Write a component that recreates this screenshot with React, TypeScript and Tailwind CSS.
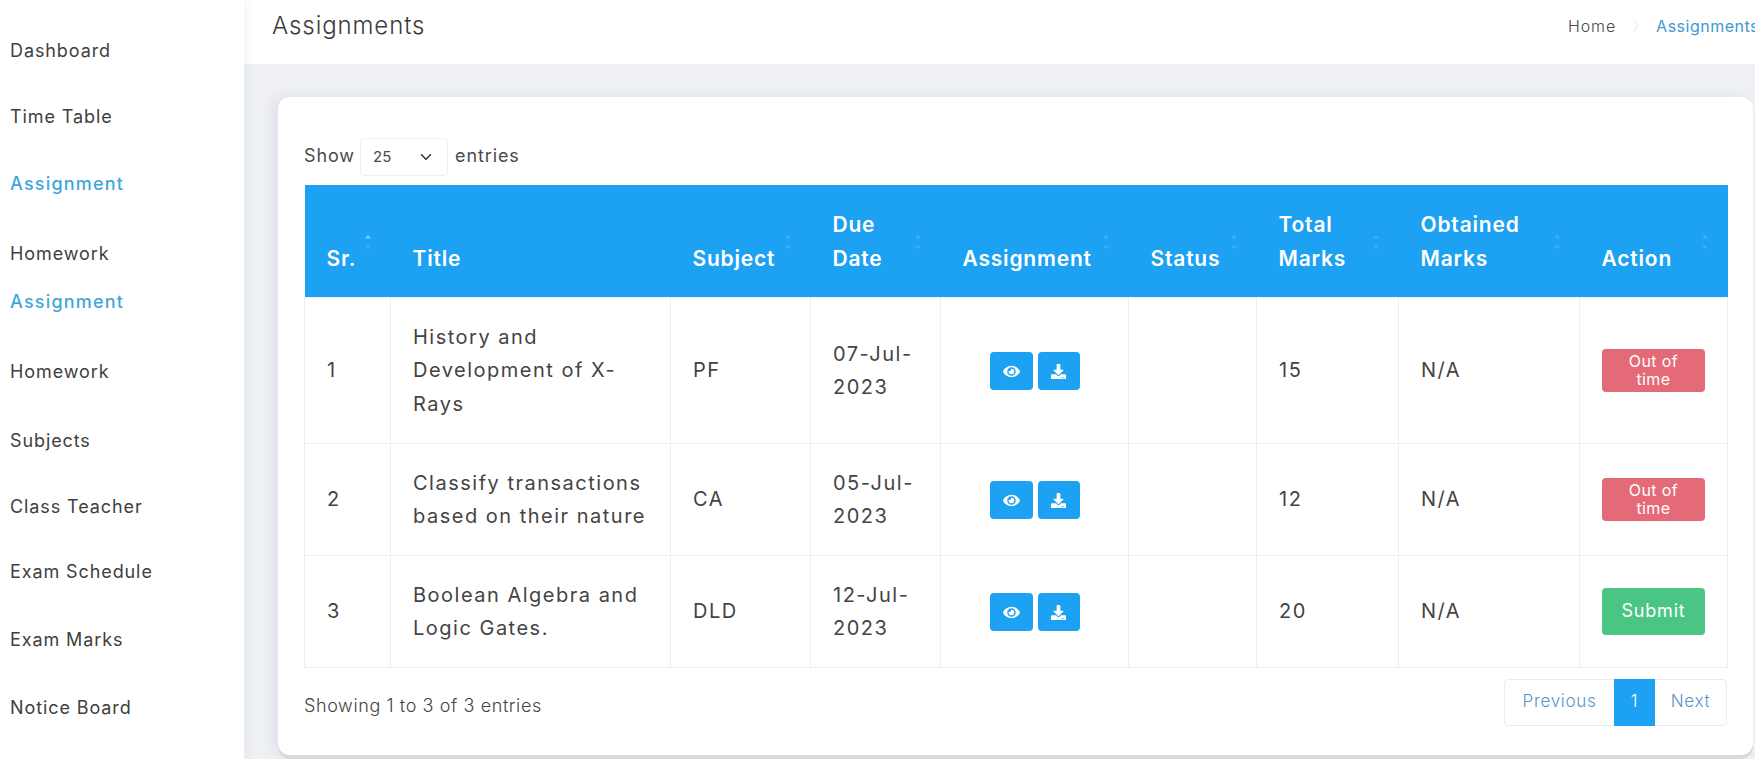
import { FaEye, FaDownload } from "react-icons/fa";
import { ChevronDown, ChevronRight } from "lucide-react";

const nav = [
  { label: "Dashboard", cls: "mt-[39px] text-[#404040]" },
  { label: "Time Table", cls: "mt-[42px] text-[#404040]" },
  { label: "Assignment", cls: "mt-[43px] text-[#3fa7db] font-medium tracking-[1.2px]" },
  { label: "Homework", cls: "mt-[46px] text-[#404040]" },
  { label: "Assignment", cls: "mt-[24px] text-[#3fa7db] font-medium tracking-[1.2px]" },
  { label: "Homework", cls: "mt-[46px] text-[#404040]" },
  { label: "Subjects", cls: "mt-[45px] text-[#404040]" },
  { label: "Class Teacher", cls: "mt-[42px] text-[#404040]" },
  { label: "Exam Schedule", cls: "mt-[41px] text-[#404040]" },
  { label: "Exam Marks", cls: "mt-[44px] text-[#404040]" },
  { label: "Notice Board", cls: "mt-[44px] text-[#404040]" },
];

function SortIcon({ active = false }: { active?: boolean }) {
  return (
    <svg className="absolute right-[18px] top-[48px]" width="10" height="18" viewBox="0 0 10 18">
      <path d="M5 1.5 L8 5.5 L2 5.5 Z" fill={active ? "#7cc8fa" : "#3fadf5"} />
      <path d="M5 16.5 L8 12.5 L2 12.5 Z" fill="#3fadf5" />
    </svg>
  );
}

const heads: { lines: string[]; active?: boolean; noSort?: boolean }[] = [
  { lines: ["Sr."], active: true },
  { lines: ["Title"], noSort: true },
  { lines: ["Subject"] },
  { lines: ["Due", "Date"] },
  { lines: ["Assignment"] },
  { lines: ["Status"] },
  { lines: ["Total", "Marks"] },
  { lines: ["Obtained", "Marks"] },
  { lines: ["Action"] },
];

const rows = [
  { sr: "1", title: ["History and", "Development of X-", "Rays"], subject: "PF", date: ["07-Jul-", "2023"], marks: "15", h: "h-[146px]", late: true },
  { sr: "2", title: ["Classify transactions", "based on their nature"], subject: "CA", date: ["05-Jul-", "2023"], marks: "12", h: "h-[112px]", late: true },
  { sr: "3", title: ["Boolean Algebra and", "Logic Gates."], subject: "DLD", date: ["12-Jul-", "2023"], marks: "20", h: "h-[112px]", late: false },
];

const cell = "border border-[#eceef2] px-[22px] pt-[2px] align-middle text-[20px] leading-[33.5px] tracking-[1.5px] text-[#444444] whitespace-nowrap";

export default function App() {
  return (
    <div className="flex h-[759px] w-[1755px] overflow-hidden bg-[#eef0f4] font-['Inter',sans-serif]">
      <aside className="relative z-10 flex h-full w-[244px] shrink-0 flex-col bg-white pl-[10px] text-[18px] leading-[24px] tracking-[0.9px] shadow-[2px_0_10px_rgba(120,130,150,0.1)]">
        {nav.map((n, i) => (
          <div key={i} className={n.cls}>
            {n.label}
          </div>
        ))}
      </aside>

      <main className="flex min-w-0 flex-1 flex-col">
        <header className="flex h-[64px] shrink-0 items-start justify-between overflow-hidden bg-white pl-[28px]">
          <h1 className="mt-[10px] text-[24px] font-light leading-[32px] tracking-[0.9px] text-[#3b3b3b]">Assignments</h1>
          <nav className="-mr-[4px] mt-[14px] flex shrink-0 items-center whitespace-nowrap text-[16px] leading-[24px] tracking-[0.5px]">
            <span className="font-light tracking-[0.9px] text-[#4a4a4a]">Home</span>
            <ChevronRight className="mx-[11px] text-[#d4d7dc]" size={18} strokeWidth={1} />
            <span className="text-[#3f97d4]">Assignments</span>
          </nav>
        </header>

        <div className="flex flex-1 flex-col pb-[4px] pl-[34px] pr-[2px] pt-[33px]">
          <section className="flex flex-1 flex-col rounded-[12px] bg-white pl-[26px] pr-[25px] pt-[41px] shadow-[0_4px_0_#d9dadd,-6px_0_12px_rgba(120,130,150,0.12)]">
            <div className="flex h-[38px] items-center text-[18px] tracking-[0.9px] text-[#4a4a4a]">
              <span className="w-[56px] pb-[3px]">Show</span>
              <div className="flex h-[38px] w-[88px] items-center justify-between rounded-[4px] border border-[#eef0f3] pl-[12px] pr-[12px] text-[15px] tracking-normal">
                <span>25</span>
                <ChevronDown size={18} strokeWidth={2} className="text-[#333]" />
              </div>
              <span className="ml-[7px] pb-[3px]">entries</span>
            </div>

            <table className="mt-[9px] w-[1423px] table-fixed border-collapse">
              <colgroup>
                <col className="w-[86px]" />
                <col className="w-[280px]" />
                <col className="w-[140px]" />
                <col className="w-[130px]" />
                <col className="w-[188px]" />
                <col className="w-[128px]" />
                <col className="w-[142px]" />
                <col className="w-[181px]" />
                <col className="w-[148px]" />
              </colgroup>
              <thead>
                <tr className="h-[112px] bg-[#1da1f2]">
                  {heads.map((h, i) => (
                    <th key={i} className="relative px-[22px] pb-[21px] text-left align-bottom text-[21px] font-semibold leading-[34px] tracking-[0.8px] text-white">
                      {h.lines.map((l) => (
                        <div key={l}>{l}</div>
                      ))}
                      {!h.noSort && <SortIcon active={h.active} />}
                    </th>
                  ))}
                </tr>
              </thead>
              <tbody>
                {rows.map((r) => (
                  <tr key={r.sr} className={r.h}>
                    <td className={cell}>{r.sr}</td>
                    <td className={cell}>
                      {r.title.map((l) => (
                        <div key={l}>{l}</div>
                      ))}
                    </td>
                    <td className={cell}>{r.subject}</td>
                    <td className={cell}>
                      {r.date.map((l) => (
                        <div key={l}>{l}</div>
                      ))}
                    </td>
                    <td className={cell}>
                      <div className="flex justify-center gap-[5px]">
                        <span className="flex h-[38px] w-[43px] items-center justify-center rounded-[4px] bg-[#1da1f2] text-white">
                          <FaEye size={17} />
                        </span>
                        <span className="flex h-[38px] w-[42px] items-center justify-center rounded-[4px] bg-[#1da1f2] text-white">
                          <FaDownload size={15} />
                        </span>
                      </div>
                    </td>
                    <td className={cell}></td>
                    <td className={cell}>{r.marks}</td>
                    <td className={cell}>N/A</td>
                    <td className={cell}>
                      {r.late ? (
                        <div className="-mt-[2px] flex h-[43px] w-[103px] items-center justify-center rounded-[4px] bg-[#e56a78] text-center text-[16px] leading-[18px] tracking-[0.4px] text-white">
                          Out of
                          <br />
                          time
                        </div>
                      ) : (
                        <div className="-mt-[2px] flex h-[47px] w-[103px] items-center justify-center rounded-[4px] bg-[#4bc583] text-[18px] tracking-[0.8px] text-white">
                          Submit
                        </div>
                      )}
                    </td>
                  </tr>
                ))}
              </tbody>
            </table>

            <div className="mt-[11px] flex items-start justify-between">
              <span className="mt-[15px] text-[18px] font-light leading-[24px] tracking-[0.6px] text-[#444444]">Showing 1 to 3 of 3 entries</span>
              <div className="mr-[1px] flex h-[47px] w-[223px] items-center rounded-[4px] border border-[#e9ebf0] text-[17px] font-light tracking-[0.7px] text-[#5b93cb]">
                <span className="flex w-[109px] justify-center">Previous</span>
                <span className="flex h-[47px] w-[41px] items-center justify-center bg-[#1da1f2] text-white">1</span>
                <span className="flex flex-1 justify-center">Next</span>
              </div>
            </div>
          </section>
        </div>
      </main>
    </div>
  );
}
